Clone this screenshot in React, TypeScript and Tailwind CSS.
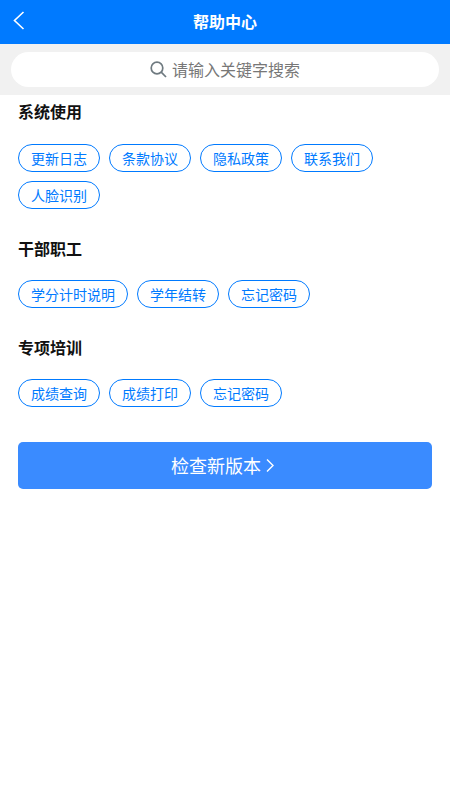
const font = { fontFamily: '"Noto Sans CJK SC", "Liberation Sans", sans-serif' };

type HelpSection = {
  title: string;
  tags: string[];
};

const sections: HelpSection[] = [
  { title: "系统使用", tags: ["更新日志", "条款协议", "隐私政策", "联系我们", "人脸识别"] },
  { title: "干部职工", tags: ["学分计时说明", "学年结转", "忘记密码"] },
  { title: "专项培训", tags: ["成绩查询", "成绩打印", "忘记密码"] },
];

function Tag({ label }: { label: string }) {
  return (
    <span className="flex h-[28px] items-center rounded-full border border-[#007aff] px-[12px] pb-[1px] text-[14px] leading-none text-[#007aff]">
      {label}
    </span>
  );
}

export default function App() {
  return (
    <div className="min-h-[800px] bg-white" style={font}>
      {/* header */}
      <header className="relative flex h-[44px] items-center justify-center bg-[#007aff]">
        <svg
          className="absolute left-[13px] top-[11px]"
          width="12"
          height="20"
          viewBox="0 0 12 20"
          fill="none"
          stroke="#fff"
          strokeWidth="1.6"
        >
          <path d="M10.5 1 L1.5 9.5 L10.5 18" />
        </svg>
        <h1 className="pb-[3px] text-[16px] font-bold text-white">帮助中心</h1>
      </header>

      {/* search */}
      <div className="bg-[#f1f1f1] px-[11px] py-[8px]">
        <div className="flex h-[35px] items-center justify-center gap-[5px] rounded-full bg-white text-[16px] text-[#777]">
          <svg
            width="17"
            height="17"
            viewBox="0 0 17 17"
            fill="none"
            stroke="#6f7a80"
            strokeWidth="1.7"
          >
            <circle cx="7" cy="7" r="5.8" />
            <path d="M11.2 11.2 L16 16" />
          </svg>
          <span className="pb-[2px]">请输入关键字搜索</span>
        </div>
      </div>

      <main className="px-[18px]">
        {sections.map((section, i) => (
          <section key={section.title} className={i === 0 ? "pt-[4px]" : "pt-[27px]"}>
            <h2 className="text-[16px] font-bold leading-[24px] text-[#111]">{section.title}</h2>
            <div
              className={`flex flex-wrap gap-x-[9px] gap-y-[9px] ${i === 0 ? "mt-[21px]" : "mt-[20px]"}`}
            >
              {section.tags.map((tag) => (
                <Tag key={tag} label={tag} />
              ))}
            </div>
          </section>
        ))}

        <button className="mt-[35px] flex h-[47px] w-full items-center justify-center gap-[5px] rounded-[5px] bg-[#3a8bff] pr-[5px] text-[18px] text-white">
          <span className="pb-[1px]">检查新版本</span>
          <svg width="8" height="15" viewBox="0 0 8 15" fill="none" stroke="#fff" strokeWidth="1.4">
            <path d="M1 1.5 L7 7.5 L1 13.5" />
          </svg>
        </button>
      </main>
    </div>
  );
}
